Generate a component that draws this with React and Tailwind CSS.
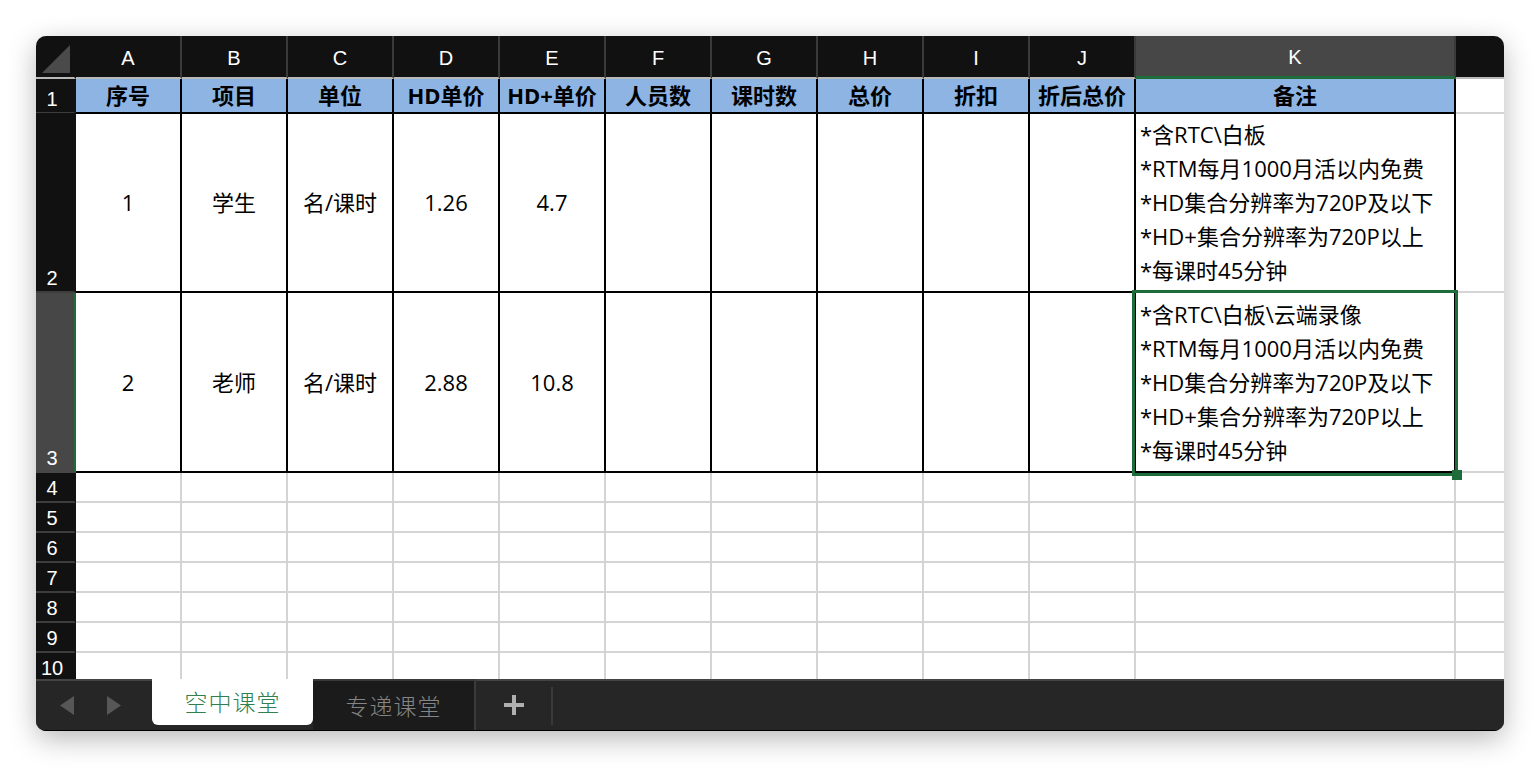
import React from 'react';

const COLS = ['A', 'B', 'C', 'D', 'E', 'F', 'G', 'H', 'I', 'J', 'K'];
const HEAD = ['序号', '项目', '单位', 'HD单价', 'HD+单价', '人员数', '课时数', '总价', '折扣', '折后总价', '备注'];

const NOTES_1 = ['*含RTC\\白板', '*RTM每月1000月活以内免费', '*HD集合分辨率为720P及以下', '*HD+集合分辨率为720P以上', '*每课时45分钟'];
const NOTES_2 = ['*含RTC\\白板\\云端录像', '*RTM每月1000月活以内免费', '*HD集合分辨率为720P及以下', '*HD+集合分辨率为720P以上', '*每课时45分钟'];

const DATA = [
  { n: '2', cells: ['1', '学生', '名/课时', '1.26', '4.7', '', '', '', '', ''], notes: NOTES_1 },
  { n: '3', cells: ['2', '老师', '名/课时', '2.88', '10.8', '', '', '', '', ''], notes: NOTES_2, active: true },
];

const GRID = 'grid grid-cols-[40px_repeat(10,106px)_320px_1fr]';
const CELL_FONT = "font-['Open_Sans','Noto_Sans_CJK_SC',sans-serif]";
const HEAD_FONT = "font-['Liberation_Sans',sans-serif]";

function RowHead({ n, active }) {
  return (
    <div
      className={`flex items-end justify-center pr-[6px] pb-[1px] border-b-2 border-r-2 text-white text-[20px] leading-[23px] ${HEAD_FONT} ${
        active ? 'bg-[#474747] border-b-[#474747] border-r-[#1e6b3c]' : 'bg-[#111] border-b-[#3d3d3d] border-r-[#111]'
      }`}
    >
      {n}
    </div>
  );
}

function ColumnHeader() {
  return (
    <div className={`${GRID} h-[43px]`}>
      <div className="relative bg-[#111] border-r-2 border-r-[#111] border-b-2 border-b-[#b9b9b9]">
        <svg className="absolute left-[4px] top-[7px]" width="32" height="32" viewBox="0 0 32 32">
          <polygon points="2,30 30,30 30,2" fill="#4a4a4a" />
        </svg>
      </div>
      {COLS.map((c) => (
        <div
          key={c}
          className={`flex items-center justify-center pt-[2px] text-white text-[20px] border-r-2 border-r-[#3a3a3a] ${HEAD_FONT} ${
            c === 'K' ? 'bg-[#474747] border-b-[3px] border-b-[#1e6b3c]' : 'bg-[#111] border-b-2 border-b-[#b9b9b9]'
          }`}
        >
          {c}
        </div>
      ))}
      <div className="bg-[#111] border-b-2 border-b-[#b9b9b9]" />
    </div>
  );
}

function TitleRow() {
  return (
    <div className={`${GRID} h-[34px]`}>
      <RowHead n="1" />
      {HEAD.map((h) => (
        <div
          key={h}
          className={`flex items-center justify-center bg-[#8db4e2] border-r-2 border-b-2 border-black text-[22px] font-bold text-black ${CELL_FONT}`}
        >
          {h}
        </div>
      ))}
      <div className="border-b-2 border-[#d4d4d4]" />
    </div>
  );
}

function DataRow({ row }) {
  return (
    <div className={`${GRID} h-[180px]`}>
      <RowHead n={row.n} active={row.active} />
      {row.cells.map((v, i) => (
        <div
          key={i}
          className={`flex items-center justify-center border-r-2 border-b-2 border-black text-[22px] text-black ${CELL_FONT}`}
        >
          {v}
        </div>
      ))}
      <div className={`flex flex-col justify-center pl-[4px] border-r-2 border-b-2 border-black text-[22px] leading-[34px] text-black whitespace-nowrap ${CELL_FONT}`}>
        {row.notes.map((t) => (
          <div key={t}>{t}</div>
        ))}
      </div>
      <div className="border-b-2 border-[#d4d4d4]" />
    </div>
  );
}

function EmptyRow({ n }) {
  return (
    <div className={`${GRID} h-[30px]`}>
      <RowHead n={n} />
      {COLS.map((c) => (
        <div key={c} className="border-r-2 border-b-2 border-[#d4d4d4] bg-white" />
      ))}
      <div className="border-b-2 border-[#d4d4d4]" />
    </div>
  );
}

function TabBar() {
  return (
    <div className={`flex h-[52px] bg-[#262626] border-b border-b-black ${CELL_FONT}`}>
      <div className="w-[116px] flex items-center gap-[33px] pl-[24px] border-t-2 border-[#434343]">
        <svg width="14" height="19" viewBox="0 0 14 19">
          <polygon points="14,0 14,19 0,9.5" fill="#575757" />
        </svg>
        <svg width="14" height="19" viewBox="0 0 14 19">
          <polygon points="0,0 0,19 14,9.5" fill="#575757" />
        </svg>
      </div>
      <div className="w-[161px] h-[46px] bg-white rounded-b-[6px] flex items-center justify-center text-[23px] font-light text-[#2f7f4f] tracking-[1px]">
        空中课堂
      </div>
      <div className="w-[163px] bg-[#1b1b1b] border-t-2 border-[#3a3a3a] border-r-2 border-r-[#3a3a3a] flex items-center justify-center pt-[2px] text-[23px] font-light text-[#858585] tracking-[1px]">
        专递课堂
      </div>
      <div className="w-[75px] flex items-center justify-center border-t-2 border-[#434343] pb-[2px]">
        <svg width="22" height="22" viewBox="0 0 22 22">
          <path d="M11 1v20M1 11h20" stroke="#b0b0b0" strokeWidth="4" />
        </svg>
      </div>
      <div className="flex-1 flex items-center border-t-2 border-[#434343]">
        <div className="w-[2px] h-[38px] bg-[#3a3a3a]" />
      </div>
    </div>
  );
}

export default function App() {
  return (
    <div className="min-h-screen bg-white p-[36px]">
      <div className="w-[1468px] h-[695px] rounded-[10px] overflow-hidden bg-[#111] shadow-[0_8px_28px_rgba(0,0,0,0.28)] flex flex-col">
        <div className="relative h-[643px] overflow-hidden bg-white">
          <ColumnHeader />
          <TitleRow />
          {DATA.map((r) => (
            <DataRow key={r.n} row={r} />
          ))}
          {['4', '5', '6', '7', '8', '9', '10'].map((n) => (
            <EmptyRow key={n} n={n} />
          ))}
          <div className="absolute left-[1096px] top-[254px] w-[326px] h-[186px] border-[3px] border-[#1e6b3c] pointer-events-none">
            <div className="absolute right-[-7px] bottom-[-7px] w-[10px] h-[10px] bg-[#1e6b3c]" />
          </div>
        </div>
        <TabBar />
      </div>
    </div>
  );
}
